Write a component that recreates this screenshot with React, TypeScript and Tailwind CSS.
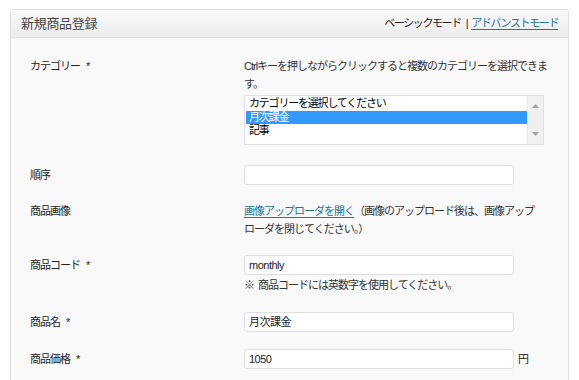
import React from 'react';

const font = "font-['Liberation_Sans','Noto_Sans_CJK_JP',sans-serif]";

const options = [
  { label: "カテゴリーを選択してください", selected: false },
  { label: "月次課金", selected: true },
  { label: "記事", selected: false },
];

function Label({ text, required, tall }: { text: string; required?: boolean; tall?: boolean }) {
  return (
    <div className={`w-[214px] shrink-0 text-[11px] tracking-[-1px] text-[#222] ${tall ? "leading-[20px]" : "leading-[18px]"}`}>
      {text}
      {required && <span className="ml-[6px]">*</span>}
    </div>
  );
}

function TextInput({ value }: { value?: string }) {
  return (
    <div className="h-[20px] w-[270px] rounded-[3px] border border-[#dfdfdf] bg-white px-[4px] text-[11px] leading-[18px] tracking-[-0.5px] text-[#222]">
      {value}
    </div>
  );
}

export default function App() {
  return (
    <div className={`min-h-screen bg-white pl-[10px] pt-[9px] ${font}`}>
      <div className="w-[559px] rounded-tl-[4px] rounded-tr-[4px] border border-b-0 border-[#dfdfdf] bg-[#f9f9f9] pb-[40px]">
        {/* header */}
        <div className="flex h-[28px] items-center justify-between border-b border-[#dfdfdf] bg-gradient-to-b from-[#f9f9f9] to-[#ececec] pl-[10px] pr-[10px]">
          <h3 className="text-[13px] leading-[28px] tracking-[-0.3px] text-[#464646]">新規商品登録</h3>
          <div className="flex text-[11px] tracking-[-1.4px] text-[#222]">
            <span>ベーシックモード</span>
            <span className="ml-[5px] mr-[4px]">|</span>
            <a href="#" className="text-[#21759b] underline underline-offset-[2px]">アドバンストモード</a>
          </div>
        </div>

        <div className="pl-[19px]">
          {/* カテゴリー */}
          <div className="flex pt-[19px]">
            <Label text="カテゴリー" required />
            <div>
              <p className="whitespace-nowrap text-[11px] leading-[18px] tracking-[-1px] text-[#333]">
                Ctrlキーを押しながらクリックすると複数のカテゴリーを選択できま
                <br />
                す。
              </p>
              <div className="mt-[2px] flex h-[50px] w-[300px] border border-[#dfdfdf] bg-white">
                <div className="flex-1 pl-[1px] pt-[1px]">
                  {options.map((o) => (
                    <div
                      key={o.label}
                      className={`h-[13.5px] whitespace-nowrap px-[3px] text-[11px] leading-[13.5px] tracking-[-1.2px] ${o.selected ? "bg-[#3399ff] text-white" : "text-black"}`}
                    >
                      {o.label}
                    </div>
                  ))}
                </div>
                <div className="flex w-[16px] flex-col items-center justify-between border-l border-[#e6e6e6] bg-[#f0f0f0] py-[8px]">
                  <svg width="7" height="4" viewBox="0 0 7 4">
                    <path d="M3.5 0 L7 4 L0 4 Z" fill="#a3a3a3" />
                  </svg>
                  <svg width="7" height="4" viewBox="0 0 7 4">
                    <path d="M0 0 L7 0 L3.5 4 Z" fill="#a3a3a3" />
                  </svg>
                </div>
              </div>
            </div>
          </div>

          {/* 順序 */}
          <div className="flex pt-[20px]">
            <Label text="順序" tall />
            <TextInput />
          </div>

          {/* 商品画像 */}
          <div className="flex pt-[17px]">
            <Label text="商品画像" />
            <p className="whitespace-nowrap text-[11px] leading-[18px] tracking-[-1px] text-[#333]">
              <a href="#" className="text-[#21759b] underline underline-offset-[2px]">画像アップローダを開く</a>
              （画像のアップロード後は、画像アップ
              <br />
              ローダを閉じてください。）
            </p>
          </div>

          {/* 商品コード */}
          <div className="flex pt-[17px]">
            <Label text="商品コード" required tall />
            <div>
              <TextInput value="monthly" />
              <p className="mt-[1px] whitespace-nowrap text-[11px] leading-[18px] tracking-[-1px] text-[#333]">
                ※<span className="ml-[4px]">商品コードには英数字を使用してください。</span>
              </p>
            </div>
          </div>

          {/* 商品名 */}
          <div className="flex pt-[18px]">
            <Label text="商品名" required tall />
            <TextInput value="月次課金" />
          </div>

          {/* 商品価格 */}
          <div className="flex pt-[17px]">
            <Label text="商品価格" required tall />
            <div className="flex items-center">
              <TextInput value="1050" />
              <span className="ml-[4px] text-[11px] text-[#222]">円</span>
            </div>
          </div>
        </div>
      </div>
    </div>
  );
}
